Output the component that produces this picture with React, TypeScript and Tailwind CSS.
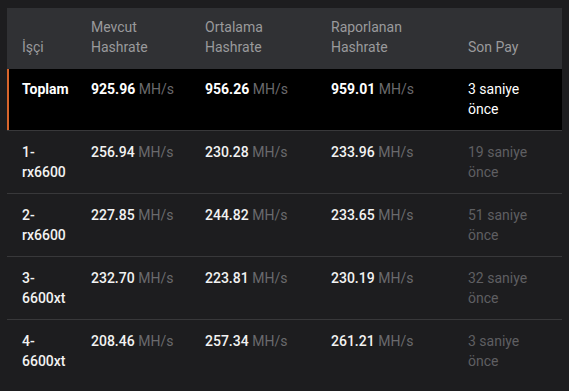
import React from "react";

const cols = "grid grid-cols-[69px_114px_126px_137px_109px]";

type Row = { name: string; cur: string; avg: string; rep: string; last: string };

const rows: Row[] = [
  { name: "1-rx6600", cur: "256.94", avg: "230.28", rep: "233.96", last: "19 saniye önce" },
  { name: "2-rx6600", cur: "227.85", avg: "244.82", rep: "233.65", last: "51 saniye önce" },
  { name: "3-6600xt", cur: "232.70", avg: "223.81", rep: "230.19", last: "32 saniye önce" },
  { name: "4-6600xt", cur: "208.46", avg: "257.34", rep: "261.21", last: "3 saniye önce" },
];

function Val({ v, bold }: { v: string; bold?: boolean }) {
  return (
    <div className="pl-[15px] pr-[4px] whitespace-nowrap">
      <span className={bold ? "font-bold text-white" : "font-medium text-[#f2f2f2]"}>{v}</span>{" "}
      <span className="text-[#6a6a6d]">MH/s</span>
    </div>
  );
}

export default function App() {
  return (
    <div
      className="w-[569px] h-[391px] bg-[#1d1d1f] pt-[8px] pl-[7px] overflow-hidden text-[14px] leading-[20px]"
      style={{ fontFamily: "Roboto, 'Liberation Sans', sans-serif" }}
    >
      <div className="w-[555px]">
        <div className={`${cols} h-[61px] bg-[#303134] items-end pb-[12px] text-[#9a9a9c]`}>
          <div className="pl-[15px]">İşçi</div>
          <div className="pl-[15px] pr-[15px]">Mevcut Hashrate</div>
          <div className="pl-[15px] pr-[15px]">Ortalama Hashrate</div>
          <div className="pl-[15px] pr-[15px]">Raporlanan Hashrate</div>
          <div className="pl-[15px]">Son Pay</div>
        </div>
        <div className={`${cols} h-[62px] bg-black border-b border-[#38383a] pt-[10px] relative`}>
          <div className="absolute left-0 top-0 bottom-0 w-[2px] bg-[#d9652c]" />
          <div className="pl-[15px] font-bold text-white">Toplam</div>
          <Val v="925.96" bold />
          <Val v="956.26" bold />
          <Val v="959.01" bold />
          <div className="pl-[15px] pr-[15px] text-white">3 saniye önce</div>
        </div>
        {rows.map((r, i) => (
          <div
            key={r.name}
            className={`${cols} h-[63px] pt-[11px] ${i < rows.length - 1 ? "border-b border-[#38383a]" : ""}`}
          >
            <div className="pl-[15px] pr-[4px] font-medium text-[#f2f2f2] break-words">{r.name}</div>
            <Val v={r.cur} />
            <Val v={r.avg} />
            <Val v={r.rep} />
            <div className="pl-[15px] pr-[15px] text-[#5f5f62]">{r.last}</div>
          </div>
        ))}
      </div>
    </div>
  );
}
